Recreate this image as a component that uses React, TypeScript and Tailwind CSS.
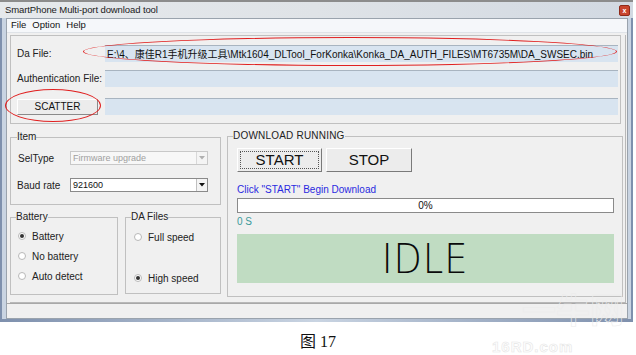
import React from "react";

function Radio({ checked, label }: { checked?: boolean; label: string }) {
  return (
    <div className="flex items-center h-[12px]">
      <span className="w-[8px] h-[8px] rounded-full border border-[#b8b8b8] bg-white flex items-center justify-center mr-[6px]">
        {checked && <span className="w-[4px] h-[4px] rounded-full bg-[#333]" />}
      </span>
      <span className="text-[10px] text-[#222]">{label}</span>
    </div>
  );
}

function Select({ value, disabled }: { value: string; disabled?: boolean }) {
  return (
    <div className={`w-[138px] h-[14px] border ${disabled ? "border-[#c8c8c8] bg-[#f7f7f7]" : "border-[#8a8a8a] bg-white"} flex items-center`}>
      <span className={`flex-1 pl-[2px] text-[9px] leading-none ${disabled ? "text-[#a0a0a0]" : "text-[#111]"}`}>{value}</span>
      <span className={`w-[11px] h-[12px] border-l ${disabled ? "border-[#d8d8d8]" : "border-[#c0c0c0]"} bg-[#f4f4f4] flex items-center justify-center`}>
        <svg width="6" height="4" viewBox="0 0 6 4">
          <path d="M0 0 L6 0 L3 3.5 Z" fill={disabled ? "#b0b0b0" : "#111"} />
        </svg>
      </span>
    </div>
  );
}

export default function App() {
  return (
    <div className="relative w-[636px] h-[355px] bg-white overflow-hidden font-['Liberation_Sans',sans-serif]">
      {/* Window */}
      <div className="w-[633px] h-[322px] flex flex-col bg-[#dde3ea] border-t-[2px] border-[#8c8c8c]">
        {/* title bar */}
        <div className="h-[16px] flex items-center pl-[5px] pr-[3px] bg-gradient-to-r from-[#e6e9ec] via-[#dfe3e7] to-[#d2d9e2]">
          <span className="text-[9.5px] text-[#1a1a1a] tracking-[-0.1px]">SmartPhone Multi-port download tool</span>
          <span className="flex-1" />
          <span className="w-[11px] h-[11px] rounded-[2px] bg-[#c9452e] border border-[#8e2a1a] flex items-center justify-center text-white text-[7px] font-bold leading-none">x</span>
        </div>
        <div className="flex flex-1">
          {/* left frame */}
          <div className="w-[6px] flex">
            <div className="w-[2px] bg-[#7e90ad]" />
            <div className="flex-1 bg-[#c9d4e2]" />
          </div>
          {/* client */}
          <div className="w-[622px] flex flex-col border border-[#9aa3ad] bg-[#f0f0f0]">
            {/* menu */}
            <div className="h-[14px] flex items-center bg-[#f5f7fa] text-[9.5px] text-[#111] pl-[4px] gap-[6px] border-b border-[#dfe3e8]">
              <span>File</span>
              <span>Option</span>
              <span>Help</span>
            </div>
            {/* content */}
            <div className="flex-1 flex flex-col pl-[3px] pr-[1px] pt-[2px]">
              <div className="flex flex-col border-r border-[#b8b8b8] pr-[2px] flex-1">
                {/* top panel */}
                <div className="w-[611px] h-[89px] border border-[#c0c0c0] flex flex-col pt-[9px] pr-[2px]">
                  <div className="flex items-center h-[17px]">
                    <span className="w-[94px] pl-[6px] text-[10px] text-[#222]">Da File:</span>
                    <div className="flex-1 h-[17px] bg-[#d8e4f0] border-t border-[#a8b4c0] flex items-center pl-[2px] text-[10px] text-[#111] whitespace-nowrap overflow-hidden font-['Liberation_Sans','Noto_Sans_CJK_SC',sans-serif]">
                      E:\4、康佳R1手机升级工具\Mtk1604_DLTool_ForKonka\Konka_DA_AUTH_FILES\MT6735M\DA_SWSEC.bin
                    </div>
                  </div>
                  <div className="flex items-center h-[17px] mt-[8px]">
                    <span className="w-[94px] pl-[6px] text-[10px] text-[#222] whitespace-nowrap">Authentication File:</span>
                    <div className="flex-1 h-[17px] bg-[#d8e4f0] border-t border-[#a8b4c0]" />
                  </div>
                  <div className="flex items-center h-[17px] mt-[11px]">
                    <div className="w-[94px] pl-[6px]">
                      <div className="w-[81px] h-[16px] bg-[#ececec] border border-t-white border-l-white border-b-[#8a8a8a] border-r-[#8a8a8a] flex items-center justify-center text-[10px] text-[#111]">
                        SCATTER
                      </div>
                    </div>
                    <div className="flex-1 h-[17px] bg-[#d8e4f0] border-t border-[#a8b4c0]" />
                  </div>
                </div>
                {/* bottom section */}
                <div className="flex mt-[8px]">
                  <div className="w-[212px] flex flex-col">
                    <fieldset className="h-[73px] border border-[#c0c0c0] px-0">
                      <legend className="ml-[6px] text-[10px] text-[#222] leading-none">Item</legend>
                      <div className="flex items-center mt-[9px] h-[14px]">
                        <span className="w-[59px] pl-[7px] text-[10px] text-[#222]">SelType</span>
                        <Select value="Firmware upgrade" disabled />
                      </div>
                      <div className="flex items-center mt-[13px] h-[14px]">
                        <span className="w-[59px] pl-[6px] text-[10px] text-[#222]">Baud rate</span>
                        <Select value="921600" />
                      </div>
                    </fieldset>
                    <div className="flex mt-[7px] gap-[7px]">
                      <fieldset className="w-[108px] h-[83px] border border-[#c0c0c0] px-0">
                        <legend className="ml-[5px] text-[10px] text-[#222] leading-none">Battery</legend>
                        <div className="flex flex-col pl-[7px] pt-[8px] gap-[8px]">
                          <Radio checked label="Battery" />
                          <Radio label="No battery" />
                          <Radio label="Auto detect" />
                        </div>
                      </fieldset>
                      <fieldset className="w-[96px] h-[82px] border border-[#c0c0c0] px-0">
                        <legend className="ml-[5px] text-[10px] text-[#222] leading-none">DA Files</legend>
                        <div className="flex flex-col pl-[8px] pt-[9px] gap-[29px]">
                          <Radio label="Full speed" />
                          <Radio checked label="High speed" />
                        </div>
                      </fieldset>
                    </div>
                  </div>
                  <fieldset className="ml-[6px] w-[396px] h-[166px] border border-[#c0c0c0] px-0 -mt-[1px]">
                    <legend className="ml-[5px] text-[10px] text-[#222] leading-none tracking-[0.2px]">DOWNLOAD RUNNING</legend>
                    <div className="pl-[9px] pr-[8px] flex flex-col">
                      <div className="flex gap-[4px] mt-[7px]">
                        <div className="w-[85px] h-[24px] bg-[#ececec] border border-t-white border-l-white border-b-[#7a7a7a] border-r-[#7a7a7a] flex items-center justify-center">
                          <div className="w-[79px] h-[18px] border border-dotted border-[#555] flex items-center justify-center text-[15px] text-[#111]">START</div>
                        </div>
                        <div className="w-[86px] h-[24px] bg-[#ececec] border border-t-white border-l-white border-b-[#7a7a7a] border-r-[#7a7a7a] flex items-center justify-center text-[15px] text-[#111]">
                          STOP
                        </div>
                      </div>
                      <div className="mt-[11px] text-[10px] text-[#2a2ae0] leading-[13px]">Click "START" Begin Download</div>
                      <div className="mt-[2px] w-[377px] h-[15px] bg-white border border-[#8a8a8a] flex items-center justify-center text-[10px] text-[#111]">0%</div>
                      <div className="mt-[3px] text-[10px] text-[#3a9a9a] leading-[12px]">0 S</div>
                      <div className="mt-[6px] w-[377px] h-[49px] bg-[#c0dcc2] flex items-center justify-center">
                        <span className="text-[40px] leading-none text-[#0a0a0a] font-['DejaVu_Sans',sans-serif] font-extralight tracking-[1px] scale-x-[0.92]">IDLE</span>
                      </div>
                    </div>
                  </fieldset>
                </div>
                <div className="flex-1" />
              </div>
              <div className="h-[1px] bg-[#b8b8b8]" />
            </div>
            {/* status bar */}
            <div className="h-[15px] border-t border-[#a8a8a8] bg-[#f0f0f0]" />
          </div>
          {/* right frame */}
          <div className="flex-1 flex">
            <div className="flex-1 bg-[#c9d4e2]" />
            <div className="w-[2px] bg-[#7e90ad]" />
          </div>
        </div>
        <div className="h-[3px] bg-gradient-to-r from-[#7e90ad] via-[#c9d4e2] to-[#7e90ad]" />
      </div>

      {/* red annotation ellipses */}
      <div className="absolute left-[83px] top-[37px] w-[534px] h-[29px] rounded-[50%] border-[1.5px] border-[#e02020]" />
      <div className="absolute left-[5px] top-[89px] w-[96px] h-[33px] rounded-[50%] border-[1.5px] border-[#e02020]" />

      {/* watermark */}
      <div className="absolute left-[522px] top-[292px] text-[34px] text-transparent font-bold leading-none [-webkit-text-stroke:0.6px_#ececec] font-['Noto_Sans_CJK_SC',sans-serif]">一牛网</div>
      <div className="absolute left-[492px] top-[339px] text-[15px] text-transparent font-bold leading-none tracking-[1px] [-webkit-text-stroke:0.6px_#e6e6e6]">16RD.com</div>

      {/* caption */}
      <div className="absolute left-[300px] top-[334px] text-[16px] leading-none text-[#111] font-['Liberation_Serif','Noto_Sans_CJK_SC',serif]">图 17</div>
    </div>
  );
}
